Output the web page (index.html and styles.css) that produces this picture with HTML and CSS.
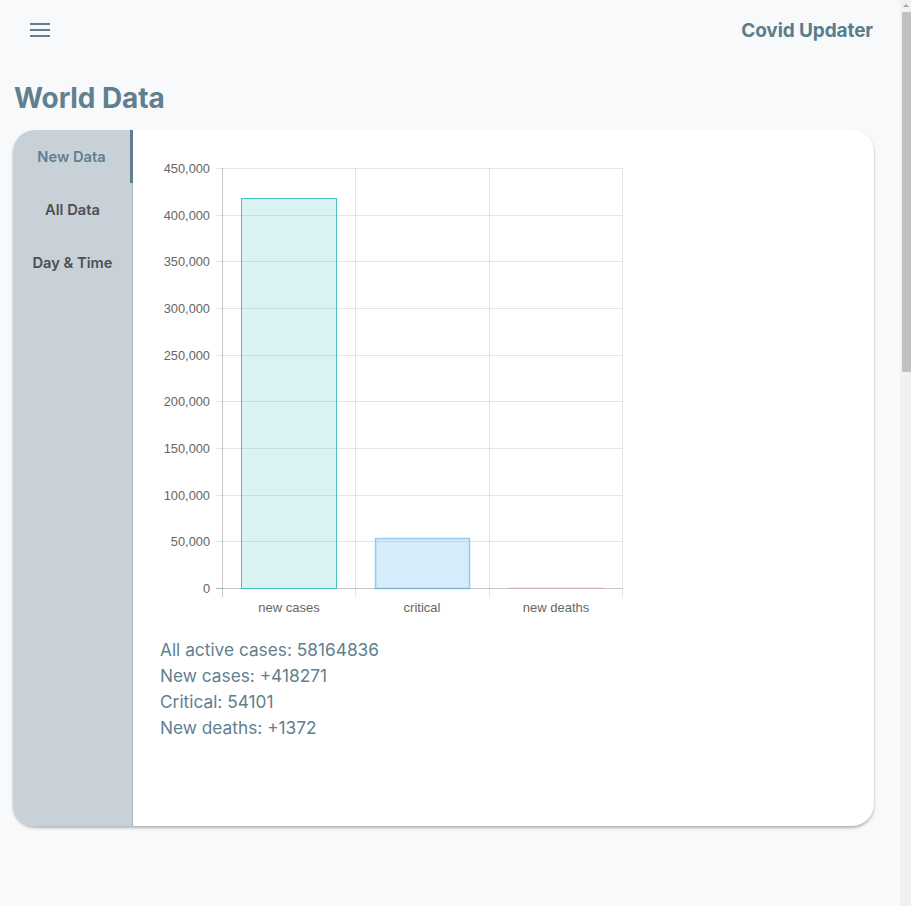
FILE: index.html
```html
<!DOCTYPE html>
<html lang="en">
<head>
<meta charset="utf-8">
<title>Covid Updater</title>
<link rel="stylesheet" href="styles.css">
</head>
<body>
<div class="page">
  <header class="topbar">
    <button class="menu-btn" aria-label="menu">
      <svg width="20" height="14" viewBox="0 0 20 14"><path d="M0 1h20M0 7h20M0 13h20" stroke="#5f7f8f" stroke-width="2"/></svg>
    </button>
    <div class="brand">Covid Updater</div>
  </header>
  <h1 class="page-title">World Data</h1>
  <section class="card">
    <nav class="tabs">
      <div class="tab active">New Data</div>
      <div class="tab">All Data</div>
      <div class="tab">Day &amp; Time</div>
    </nav>
    <div class="content">
      <svg class="chart" width="490" height="472" viewBox="0 0 490 472">
        <g class="grid" stroke="rgba(0,0,0,0.1)" stroke-width="1">
          <path d="M82 18.5H482.5M82 65.5H482.5M82 111.5H482.5M82 158.5H482.5M82 205.5H482.5M82 251.5H482.5M82 298.5H482.5M82 345.5H482.5M82 391.5H482.5"/>
          <path d="M76 18.5H82M76 65.5H82M76 111.5H82M76 158.5H82M76 205.5H82M76 251.5H82M76 298.5H82M76 345.5H82M76 391.5H82M76 438.5H82"/>
          <path d="M215.5 18V447M349.5 18V447M482.5 18V447"/>
        </g>
        <g stroke="rgba(0,0,0,0.22)" stroke-width="1">
          <path d="M82.5 18V447"/>
          <path d="M76 438.5H482.5"/>
        </g>
        <rect x="101.5" y="48.5" width="95" height="390" fill="rgba(75,192,192,0.2)" stroke="rgb(75,192,192)" stroke-width="1"/>
        <rect x="235.5" y="388.5" width="94" height="50" fill="rgba(54,162,235,0.2)" stroke="rgba(54,162,235,0.5)" stroke-width="1.5"/>
        <rect x="368.5" y="437.5" width="95" height="1" fill="rgba(255,99,132,0.1)" stroke="rgba(255,99,132,0.12)" stroke-width="1"/>
        <g class="ylabels" text-anchor="end">
          <text x="70" y="22.5">450,000</text>
          <text x="70" y="69.5">400,000</text>
          <text x="70" y="115.5">350,000</text>
          <text x="70" y="162.5">300,000</text>
          <text x="70" y="209.5">250,000</text>
          <text x="70" y="255.5">200,000</text>
          <text x="70" y="302.5">150,000</text>
          <text x="70" y="349.5">100,000</text>
          <text x="70" y="395.5">50,000</text>
          <text x="70" y="442.5">0</text>
        </g>
        <g class="xlabels" text-anchor="middle">
          <text x="149" y="461.5">new cases</text>
          <text x="282" y="461.5">critical</text>
          <text x="416" y="461.5">new deaths</text>
        </g>
      </svg>
      <div class="stats">
        <p>All active cases: 58164836</p>
        <p>New cases: +418271</p>
        <p>Critical: 54101</p>
        <p>New deaths: +1372</p>
      </div>
    </div>
  </section>
</div>
<div class="scrollbar" aria-hidden="true">
  <div class="scroll-arrow"></div>
  <div class="scroll-thumb"></div>
</div>
</body>
</html>
```
FILE: styles.css
```css
html, body {
  margin: 0;
  padding: 0;
  background: #f8f9fb;
}
body {
  font-family: "Inter", "Noto Sans", sans-serif;
  color: #5f808f;
  margin-right: 11px;
}
.page {
  padding-bottom: 80px;
}
.topbar {
  display: flex;
  align-items: center;
  justify-content: space-between;
  height: 60px;
  padding: 0 27px 0 30px;
}
.menu-btn {
  border: 0;
  background: none;
  padding: 0;
  display: flex;
}
.brand {
  font-size: 19px;
  font-weight: 700;
  color: #5a7d8c;
  letter-spacing: -0.1px;
}
.page-title {
  margin: 21px 0 15px 14px;
  font-size: 28px;
  font-weight: 700;
  color: #5f808f;
  line-height: 34px;
  letter-spacing: -0.1px;
}
.card {
  display: flex;
  margin: 0 26px 0 13px;
  height: 696px;
  background: #fff;
  border-radius: 22px;
  overflow: hidden;
  box-shadow: 0 2px 3px rgba(0,0,0,0.28);
}
.tabs {
  width: 119px;
  flex: none;
  background: #c8d1d7;
  border-right: 1px solid #a7b1b9;
  display: flex;
  flex-direction: column;
}
.tab {
  height: 53px;
  display: flex;
  align-items: center;
  justify-content: center;
  font-size: 14.7px;
  font-weight: 600;
  color: #4e4f52;
  box-sizing: border-box;
}
.tab.active {
  color: #5f808f;
  border-right: 3px solid #5f7f8f;
  margin-right: -1px;
}
.content {
  flex: 1;
  padding: 20px 0 0 7px;
}
.chart {
  display: block;
  font-family: "Liberation Sans", Arial, sans-serif;
  font-size: 12.8px;
  fill: #666;
}
.chart .xlabels {
  font-size: 13px;
}
.stats {
  margin-top: 15px;
  padding-left: 20px;
}
.stats p {
  margin: 0;
  font-size: 17.3px;
  line-height: 26px;
  color: #5f808f;
}
.scrollbar {
  position: fixed;
  top: 0;
  right: 0;
  width: 11px;
  height: 100%;
  background: #f1f1f1;
}
.scroll-arrow {
  width: 0;
  height: 0;
  margin: 4px auto 0 3px;
  border-left: 3px solid transparent;
  border-right: 3px solid transparent;
  border-bottom: 3px solid #a3a3a3;
}
.scroll-thumb {
  margin: 5px 0 0 2px;
  width: 9px;
  height: 360px;
  background: #c1c1c1;
}
```
